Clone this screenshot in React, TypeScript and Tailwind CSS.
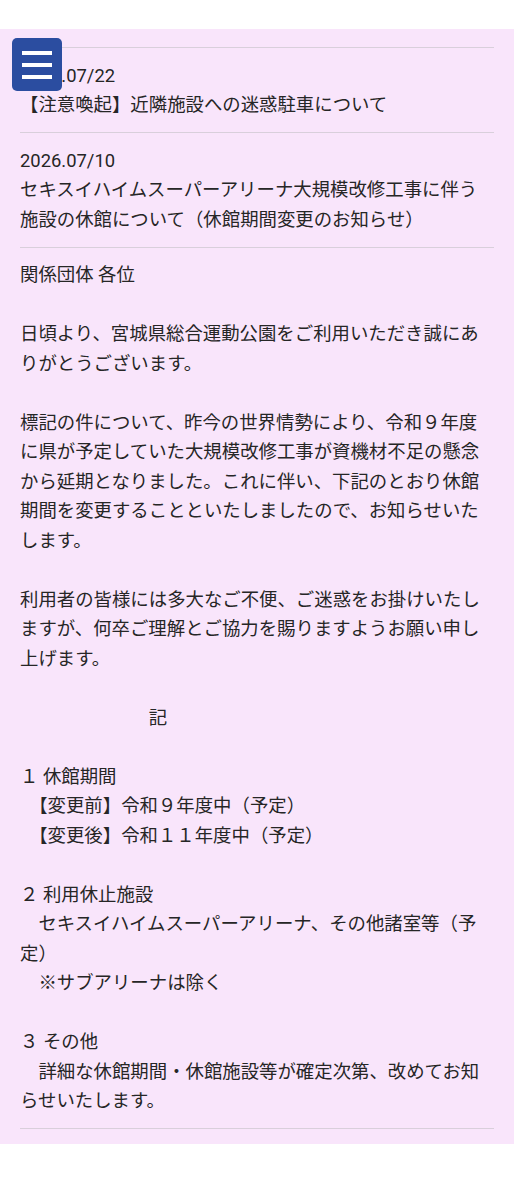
import React from 'react';

const news = [
  { date: '2026.07/22', title: '【注意喚起】近隣施設への迷惑駐車について' },
  {
    date: '2026.07/10',
    title: 'セキスイハイムスーパーアリーナ大規模改修工事に伴う施設の休館について（休館期間変更のお知らせ）',
  },
];

// body paragraphs of the opened article; each entry is one block followed by a blank line
const paragraphs: string[][] = [
  ['関係団体 各位'],
  ['日頃より、宮城県総合運動公園をご利用いただき誠にありがとうございます。'],
  [
    '標記の件について、昨今の世界情勢により、令和９年度に県が予定していた大規模改修工事が資機材不足の懸念から延期となりました。これに伴い、下記のとおり休館期間を変更することといたしましたので、お知らせいたします。',
  ],
  ['利用者の皆様には多大なご不便、ご迷惑をお掛けいたしますが、何卒ご理解とご協力を賜りますようお願い申し上げます。'],
  ['　　　　　　　記'],
  ['１ 休館期間', '　【変更前】令和９年度中（予定）', '　【変更後】令和１１年度中（予定）'],
  ['２ 利用休止施設', '　セキスイハイムスーパーアリーナ、その他諸室等（予定）', '　※サブアリーナは除く'],
  ['３ その他', '　詳細な休館期間・休館施設等が確定次第、改めてお知らせいたします。'],
];

function MenuButton() {
  return (
    <button
      type="button"
      aria-label="メニュー"
      className="fixed left-[12px] top-[38px] z-10 flex h-[53px] w-[50px] flex-col items-center justify-center gap-[8px] rounded-[5px] bg-[#2b4da0]"
    >
      <span className="block h-[4px] w-[30px] bg-white" />
      <span className="block h-[4px] w-[30px] bg-white" />
      <span className="block h-[4px] w-[30px] bg-white" />
    </button>
  );
}

export default function App() {
  return (
    <div
      className="min-h-screen bg-white pt-[29px] text-[18.4px] leading-[29.5px] text-[#262626]"
      style={{ fontFamily: 'Roboto, "Noto Sans CJK JP", sans-serif' }}
    >
      <MenuButton />
      <main className="bg-[#f9e5fb] px-[20px] pb-[15px] pt-[18px]">
        <ul>
          {news.map((item) => (
            <li key={item.date} className="border-t border-[#d9cfdb] py-[12.5px]">
              <div>{item.date}</div>
              <div>{item.title}</div>
            </li>
          ))}
        </ul>
        <article className="border-y border-[#d9cfdb] py-[12.5px]">
          {paragraphs.map((block, i) => (
            <div key={i} className={i < paragraphs.length - 1 ? 'mb-[29.5px]' : ''}>
              {block.map((line) => (
                <p key={line}>{line}</p>
              ))}
            </div>
          ))}
        </article>
      </main>
    </div>
  );
}
